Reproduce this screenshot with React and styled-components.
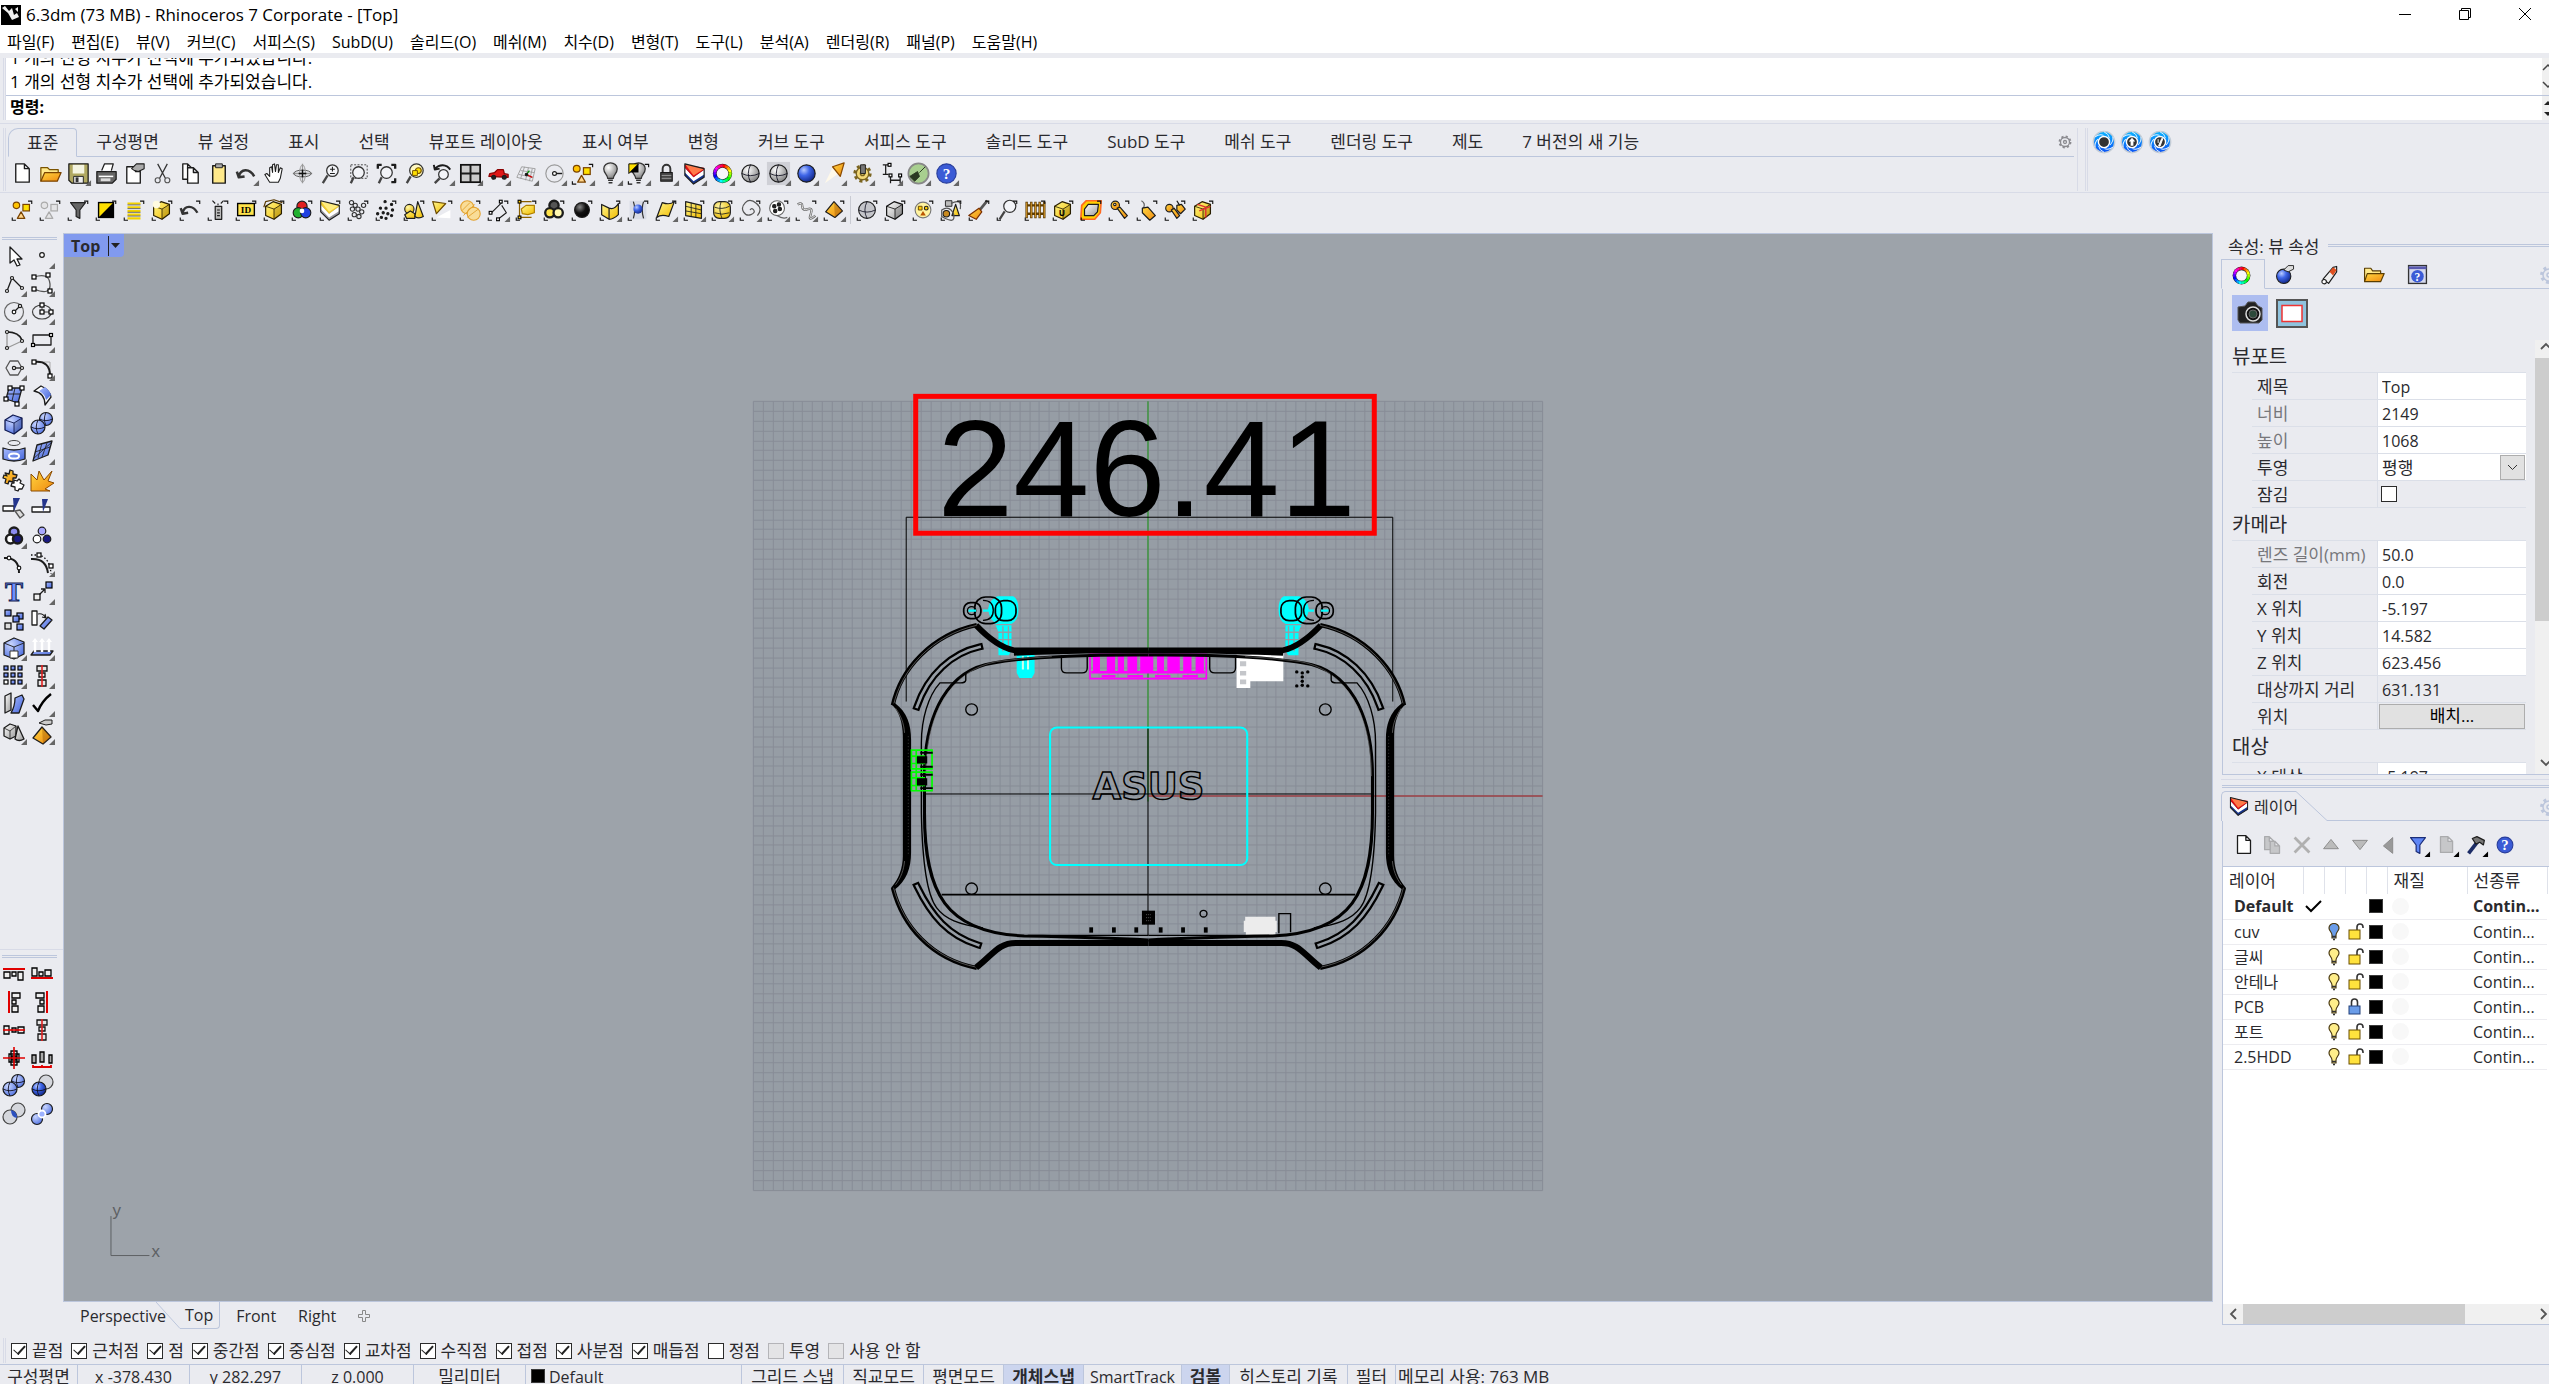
import React from 'react';
import styled, { createGlobalStyle, css } from 'styled-components';

const C = {
  bg: '#eaebf0',
  line: '#bcc6dc',
  soft: '#d8dbe7',
  text: '#2a2a2e',
  view: '#9da3aa',
};

const Global = createGlobalStyle`
  * { box-sizing: border-box; }
  html, body, #root { height: 100%; }
  body {
    margin: 0;
    overflow: hidden;
    background: ${C.bg};
    color: ${C.text};
    font-family: 'Open Sans', 'Noto Sans CJK KR', sans-serif;
    font-size: 16px;
  }
  button, input, select { font: inherit; color: inherit; }
`;

/* ---------- layout ---------- */

const Window = styled.div`
  height: 100vh;
  display: flex;
  flex-direction: column;
  overflow: hidden;
`;
const TitleBar = styled.header`
  display: flex;
  align-items: center;
  gap: 12px;
  height: 28px;
  background: #fff;
  color: #000;
`;
const AppBrand = styled.div`
  flex: 1;
  display: flex;
  align-items: center;
  gap: 5px;
`;
const AppTitle = styled.h1`
  margin: 0;
  font-size: 17px;
  font-weight: 400;
`;
const CaptionButton = styled.button`
  width: 48px;
  height: 28px;
  padding: 0;
  border: 0;
  background: none;
  display: grid;
  place-items: center;
`;
const MenuBar = styled.nav`
  display: flex;
  gap: 17px;
  height: 25px;
  padding: 0 7px;
  background: #fff;
`;
const MenuItem = styled.button`
  padding: 0;
  border: 0;
  background: none;
  color: #000;
  font-size: 16px;
  line-height: 28px;
  white-space: nowrap;
`;
const CommandArea = styled.section`
  margin-top: 5px;
  padding-left: 3px;
  display: flex;
`;
const Grip = styled.div`
  width: 3px;
  margin-right: ${p => p.$gap || 0}px;
  border-left: 1px solid ${C.soft};
  border-right: 1px solid ${C.soft};
`;
const CommandBody = styled.div`
  flex: 1;
  position: relative;
  background: #fff;
  color: #000;
`;
const History = styled.div`
  height: 38px;
  padding: 0 4px 1px;
  border-bottom: 1px solid ${C.line};
  overflow: hidden;
  display: flex;
  flex-direction: column;
  justify-content: flex-end;
  font-size: 17px;
  line-height: 24px;
`;
const HistoryLine = styled.div`
  flex: none;
`;
const Prompt = styled.label`
  display: flex;
  height: 24px;
  padding: 0 4px;
  font-weight: 700;
  line-height: 22px;
`;
const PromptInput = styled.input`
  flex: 1;
  border: 0;
  outline: 0;
  background: none;
`;
const EdgeArrows = styled.div`
  position: absolute;
  right: 0;
  top: 0;
  bottom: 0;
  width: 7px;
  background: #f0f0f0;
`;

const ToolbarArea = styled.section`
  margin-top: 3px;
  border-top: 1px solid ${C.soft};
`;
const DockRow = styled.div`
  display: flex;
  height: 69px;
  padding: 4px 0 1px 3px;
  border-bottom: 1px solid ${C.soft};
`;
const TabbedDock = styled.div`
  width: 2070px;
  border-right: 1px solid ${C.soft};
  padding-right: 3px;
`;
const TabStrip = styled.div`
  display: flex;
  height: 29px;
  align-items: stretch;
`;
const ToolTab = styled.button`
  padding: 0 20px 0 19px;
  border: 0;
  border-bottom: 1px solid ${C.line};
  background: none;
  font-size: 17px;
  line-height: 28px;
  white-space: nowrap;
  ${p => p.$active && css`
    border: 1px solid ${C.line};
    border-bottom-color: transparent;
    border-radius: 10px 4px 0 0;
    padding: 0 18px;
    line-height: 27px;
  `}
`;
const TabRest = styled.div`
  flex: 1;
  display: flex;
  justify-content: flex-end;
  align-items: center;
  border-bottom: 1px solid ${C.line};
`;
const PlainDock = styled.div`
  display: flex;
  padding-left: 7px;
`;
const ToolRow = styled.div`
  display: flex;
  align-items: center;
  height: ${p => p.$h}px;
  padding-left: ${p => p.$left || 0}px;
  padding-bottom: 1px;
`;
const ToolButton = styled.button`
  width: 28px;
  height: ${p => p.$h || 28}px;
  padding: 0;
  border: 0;
  background: none;
  display: grid;
  place-items: center;
`;
const Separator = styled.i`
  width: 1px;
  height: 28px;
  margin: 0 2px;
  background: #c9cbd3;
`;

const Main = styled.main`
  flex: 1;
  min-height: 0;
  display: flex;
`;
const SideBar = styled.aside`
  width: 63px;
  display: flex;
  flex-direction: column;
`;
const SideGroup = styled.div`
  flex: ${p => (p.$rest ? 1 : 'none')};
  min-height: ${p => p.$min || 0}px;
  border-top: 1px solid ${p => (p.$rest ? 'transparent' : C.soft)};
`;
const SideGrip = styled.div`
  height: 3px;
  margin: ${p => p.$top}px 6px 2px 2px;
  border-top: 1px solid ${C.line};
  border-bottom: 1px solid ${C.line};
`;
const SideTools = styled.div`
  display: grid;
  grid-template-columns: 28px 28px;
`;
const Center = styled.section`
  flex: 1;
  min-width: 0;
  display: flex;
  flex-direction: column;
  padding-top: 5px;
`;
const Viewport = styled.div`
  flex: 1;
  min-height: 0;
  position: relative;
  border: 1px solid ${C.line};
  background: ${C.view};
`;
const Scene = styled.svg`
  display: block;
  width: 100%;
  height: 100%;
`;
const ViewLabel = styled.button`
  position: absolute;
  left: 0;
  top: 0;
  display: flex;
  align-items: center;
  gap: 6px;
  width: 60px;
  height: 23px;
  padding: 0 0 0 7px;
  border: 0;
  border-radius: 0 0 4px 0;
  background: #819aee;
  font-size: 16px;
  line-height: 22px;
  font-weight: 700;
`;
const ViewTabs = styled.div`
  display: flex;
  height: 35px;
  padding: 0 0 8px 17px;
`;
const ViewTab = styled.button`
  padding: 0;
  margin-right: 22px;
  border: 0;
  background: none;
  font-size: 16px;
  line-height: 26px;
`;
const ActiveViewTab = styled(ViewTab)`
  margin: 0 16px 0 0;
  padding-right: 6px;
  border-right: 1px solid ${C.line};
  border-bottom: 1px solid ${C.line};
  border-radius: 0 0 4px 0;
`;
const Slant = styled.svg`
  flex: none;
  margin-left: -32px;
  width: 25px;
  height: 27px;
`;
const SlantGap = styled.i`
  width: 4px;
  border-bottom: 1px solid ${C.line};
`;

/* ---------- right side ---------- */

const Panels = styled.aside`
  width: 336px;
  padding-left: 8px;
  display: flex;
  flex-direction: column;
  overflow: hidden;
`;
const PanelTitle = styled.div`
  display: flex;
  align-items: center;
  gap: 8px;
  height: 31px;
  padding: 4px 0 0 7px;
  font-size: 17px;
  white-space: nowrap;
`;
const DoubleRule = styled.i`
  flex: 1;
  height: 3px;
  border-top: 1px solid ${C.line};
  border-bottom: 1px solid ${C.line};
`;
const PanelTabs = styled.div`
  display: flex;
  height: 30px;
`;
const PanelTab = styled.button`
  width: 44px;
  padding: 2px 4px 0 0;
  border: 0;
  border-bottom: 1px solid ${C.line};
  background: none;
  display: grid;
  place-items: center;
  ${p => p.$active && css`
    border: 1px solid ${C.line};
    border-bottom-color: transparent;
  `}
`;
const PropsBody = styled.div`
  height: 486px;
  margin-left: 1px;
  border-left: 1px solid ${C.line};
  border-bottom: 1px solid ${C.line};
  overflow: hidden;
`;
const ModeRow = styled.div`
  display: flex;
  align-items: center;
  gap: 8px;
  height: 51px;
  padding: 6px 0 9px 9px;
`;
const ModeButton = styled.button`
  width: ${p => (p.$on ? 36 : 32)}px;
  height: 36px;
  padding: 0;
  border: 0;
  background: ${p => (p.$on ? '#adbdf0' : 'none')};
  display: grid;
  place-items: center;
`;
const ScrollArea = styled.div`
  display: flex;
  height: 434px;
`;
const PropsList = styled.div`
  flex: 1;
  padding: 0 9px 0 9px;
`;
const SectionTitle = styled.h2`
  height: 33px;
  margin: 0;
  border-bottom: 1px solid #dbdfe8;
  font-size: 20px;
  font-weight: 400;
  line-height: 33px;
`;
const PropRow = styled.label`
  display: flex;
  height: 27px;
  margin-left: 20px;
  font-size: 17px;
  line-height: 28px;
`;
const PropLabel = styled.span`
  width: 126px;
  padding-left: 5px;
  border-right: 1px solid #dbdfe8;
  border-bottom: 1px solid #dbdfe8;
  color: ${p => (p.$dim ? '#77777b' : C.text)};
  white-space: nowrap;
`;
const PropCell = styled.span`
  flex: 1;
  display: flex;
  align-items: center;
  min-width: 0;
  border-bottom: 1px solid #dbdfe8;
  background: ${p => (p.$plain ? 'transparent' : '#fff')};
`;
const PropInput = styled.input`
  width: 100%;
  height: 26px;
  padding: 2px 4px 0;
  border: 0;
  outline: 0;
  background: none;
  font-size: 16px;
`;
const PropSelect = styled.select`
  appearance: none;
  flex: 1;
  height: 26px;
  padding: 0 4px;
  border: 0;
  background: none;
  font-size: 17px;
`;
const Chevron = styled.span`
  width: 25px;
  height: 25px;
  margin-right: 1px;
  border: 1px solid #adadad;
  background: #e1e1e1;
  display: grid;
  place-items: center;
`;
const PlaceButton = styled.button`
  flex: 1;
  height: 25px;
  margin: 0 1px;
  padding: 0;
  border: 1px solid #adadad;
  background: #e1e1e1;
  color: #000;
  font-size: 17px;
  line-height: 22px;
`;
const CheckBox = styled.input`
  appearance: none;
  flex: none;
  width: 16px;
  height: 16px;
  margin: 0 ${p => p.$m || 0}px;
  border: 1px solid #2b2b2b;
  background: #fff;
  display: grid;
  place-items: center;
  &:checked::before {
    content: '';
    width: 10px;
    height: 5px;
    border-left: 1px solid #222;
    border-bottom: 2px solid #222;
    transform: translateY(-2px) rotate(-48deg);
  }
  &:disabled {
    border-color: #b4b4b8;
    background: #e4e4e6;
  }
`;
const VScroll = styled.div`
  width: 14px;
  background: #f0f0f0;
  display: flex;
  flex-direction: column;
  align-items: flex-end;
  justify-content: space-between;
`;
const VThumb = styled.i`
  align-self: stretch;
  height: 263px;
  margin-bottom: auto;
  background: #cdcdcd;
`;
const ArrowSvg = styled.svg`
  flex: none;
  display: block;
`;
const Divider = styled.div`
  height: 5px;
  border-bottom: 1px solid ${C.soft};
`;
const LayerGrip = styled.div`
  display: flex;
  padding: 5px 0 3px 1px;
`;
const LayerTabs = styled.div`
  display: flex;
  height: 30px;
`;
const LayerTab = styled.button`
  display: flex;
  align-items: center;
  gap: 3px;
  padding: 0 0 1px 5px;
  border: 1px solid ${C.line};
  border-width: 1px 0 0 1px;
  border-radius: 5px 0 0 0;
  background: none;
  font-size: 16px;
`;
const LayerTabText = styled.span`
  width: 42px;
  white-space: nowrap;
`;
const LayerSlant = styled.svg`
  width: 31px;
  height: 30px;
`;
const LayerTools = styled.div`
  display: flex;
  align-items: center;
  gap: 1px;
  height: 46px;
  margin-left: 1px;
  padding: 3px 0 0 7px;
  border-left: 1px solid ${C.line};
  border-bottom: 1px solid ${C.line};
`;
const LayerBody = styled.div`
  flex: 1;
  display: flex;
  flex-direction: column;
  justify-content: space-between;
  margin: 0 0 12px 1px;
  border-left: 1px solid ${C.line};
  border-bottom: 1px solid ${C.line};
  background: #fff;
`;
const LayerTable = styled.table`
  width: 324px;
  table-layout: fixed;
  border-collapse: collapse;
  font-size: 16px;
`;
const Th = styled.th`
  width: ${p => p.$w}px;
  height: 27px;
  padding: 0 6px;
  border-right: 1px solid #dfe2ea;
  font-weight: 400;
  font-size: 17px;
  line-height: 24px;
  text-align: left;
  white-space: nowrap;
`;
const Tr = styled.tr`
  height: 25px;
  border-bottom: 1px solid #ececf0;
  font-weight: ${p => (p.$bold ? 700 : 400)};
`;
const Td = styled.td`
  height: 25px;
  padding: 0 ${p => p.$p ?? 0}px;
  line-height: 22px;
  white-space: nowrap;
  svg { display: block; }
`;
const Swatch = styled.i`
  display: block;
  width: 14px;
  height: 14px;
  background: #000;
  border: 1px solid #3a3a3a;
`;
const Material = styled.i`
  display: block;
  width: 17px;
  height: 17px;
  border-radius: 50%;
  background: #f8f8f8;
`;
const HScroll = styled.div`
  display: flex;
  align-items: center;
  justify-content: space-between;
  height: 20px;
  padding-left: 5px;
  background: #f0f0f0;
`;
const HThumb = styled.i`
  width: 222px;
  height: 20px;
  margin: 0 auto 0 4px;
  background: #cdcdcd;
`;

/* ---------- bottom ---------- */

const SnapBar = styled.div`
  display: flex;
  height: 27px;
  padding: 1px 0 1px 3px;
`;
const SnapItem = styled.label`
  display: flex;
  align-items: center;
  gap: 5px;
  margin-right: 8px;
  font-size: 17px;
  line-height: 24px;
  white-space: nowrap;
`;
const StatusBar = styled.footer`
  display: flex;
  height: 20px;
  border-top: 1px solid ${C.line};
  overflow: hidden;
  font-size: 17px;
  line-height: 24px;
`;
const StatusCell = styled.div`
  width: ${p => p.$w}px;
  padding-left: ${p => (p.$left ? 5 : 0)}px;
  display: flex;
  justify-content: ${p => (p.$left ? 'flex-start' : 'center')};
  gap: 4px;
  border-right: 1px solid ${C.line};
  font-size: ${p => (p.$value ? 16 : 17)}px;
  white-space: nowrap;
`;
const StatusSwatch = styled(Swatch)`
  margin-top: 4px;
`;
const StatusToggle = styled.button`
  width: ${p => p.$w}px;
  height: 24px;
  padding: 0;
  border: 0;
  border-right: 1px solid ${C.line};
  background: ${p => (p.$on ? '#ccd5ee' : 'none')};
  font-size: ${p => (p.$value ? 16 : 17)}px;
  font-weight: ${p => (p.$on ? 700 : 400)};
  line-height: 24px;
  white-space: nowrap;
`;
const Memory = styled.div`
  padding-left: 2px;
`;

/* ---------- icon drawing parts ---------- */

const K = '#1c1c1c';

const Defs = () => (
  <svg width="0" height="0" style={{ position: 'absolute' }} aria-hidden="true">
    <defs>
      <radialGradient id="blue" cx=".35" cy=".3" r=".8"><stop offset="0" stopColor="#b9cbff" /><stop offset=".4" stopColor="#3f66e8" /><stop offset="1" stopColor="#0a1d78" /></radialGradient>
      <radialGradient id="lite" cx=".35" cy=".3" r=".8"><stop offset="0" stopColor="#c9d6ff" /><stop offset="1" stopColor="#4a6ce0" /></radialGradient>
      <radialGradient id="gray" cx=".35" cy=".3" r=".8"><stop offset="0" stopColor="#fff" /><stop offset="1" stopColor="#777" /></radialGradient>
      <radialGradient id="dark" cx=".35" cy=".3" r=".8"><stop offset="0" stopColor="#888" /><stop offset=".5" stopColor="#111" /><stop offset="1" stopColor="#000" /></radialGradient>
      <radialGradient id="gold" cx=".35" cy=".3" r=".8"><stop offset="0" stopColor="#fff7a8" /><stop offset="1" stopColor="#e8b800" /></radialGradient>
      <linearGradient id="yel" x1="0" y1="0" x2="1" y2="1"><stop offset="0" stopColor="#fff58a" /><stop offset="1" stopColor="#f2bc00" /></linearGradient>
      <linearGradient id="ora" x1="0" y1="0" x2="1" y2="1"><stop offset="0" stopColor="#ffd640" /><stop offset="1" stopColor="#f08a10" /></linearGradient>
      <linearGradient id="blin" x1="0" y1="0" x2="1" y2="1"><stop offset="0" stopColor="#a9bcff" /><stop offset="1" stopColor="#4364d8" /></linearGradient>
      <linearGradient id="glin" x1="0" y1="0" x2="1" y2="1"><stop offset="0" stopColor="#fff" /><stop offset="1" stopColor="#9a9a9a" /></linearGradient>
      <linearGradient id="swirl" x1="0" y1="0" x2="0" y2="1"><stop offset="0" stopColor="#0ab4ff" /><stop offset="1" stopColor="#0a50f5" /></linearGradient>
    </defs>
  </svg>
);

const Sq = ({ x, y, s = 4, f = '#fff' }) => <rect x={x - s / 2} y={y - s / 2} width={s} height={s} fill={f} stroke="#000" strokeWidth="1.2" />;
const L = ({ d, c = K, w = 1.3, f = 'none', ...r }) => <path d={d} stroke={c} strokeWidth={w} fill={f} strokeLinejoin="round" {...r} />;
const O = ({ x = 14, y = 14, r = 8, f = 'none', c = K, w = 1.2 }) => <circle cx={x} cy={y} r={r} fill={f} stroke={c} strokeWidth={w} />;

const Wheel = ({ x = 14, y = 14, r = 8, w = 4 }) => (
  <>
    <O x={x} y={y} r={r + w / 2} f="#222" w={0} />
    {Array.from({ length: 18 }, (_, i) => {
      const a = (i * Math.PI) / 9;
      const b = a + 0.38;
      return <path key={i} fill="none" strokeWidth={w - 1} stroke={`hsl(${i * 20} 100% 50%)`}
        d={`M${x + r * Math.sin(a)} ${y - r * Math.cos(a)}A${r} ${r} 0 0 1 ${x + r * Math.sin(b)} ${y - r * Math.cos(b)}`} />;
    })}
    <O x={x} y={y} r={r - w / 2} f="#f6f6f8" w={0} />
  </>
);
const Doc = ({ x = 7, y = 4, w = 14, h = 19, f = '#fff', c = K }) => (
  <L d={`M${x} ${y}h${w - 5}l5 5v${h - 5}h-${w}zM${x + w - 5} ${y}v5h5`} f={f} c={c} w={1.4} />
);
const Lens = ({ x = 16, y = 11, r = 6, f = '#f3f4f8' }) => (
  <><L d={`M${x - r + 1} ${y + r - 1}L6 24`} w={2.4} c="#444" /><O x={x} y={y} r={r} f={f} c="#333" w={1.3} /></>
);
const Cube = ({ f = 'url(#yel)', c = '#2b2000' }) => (
  <><L d="M5 10l8-5 9 3v10l-8 6-9-4z" f={f} c={c} /><path d="M14 13l8-5v10l-8 6z" fill="#000" opacity=".16" /><L d="M5 10l9 3 8-5M14 13v11" c={c} w={0.9} /></>
);
const Ball = ({ x = 14, y = 14, r = 8, f = 'url(#blue)', wire }) => (
  <><O x={x} y={y} r={r} f={f} />{wire && <L d={`M${x - r} ${y}q${r} ${r / 2} ${r * 2} 0M${x} ${y - r}q-${r / 2} ${r} 0 ${r * 2}`} w={0.9} c="#112" />}</>
);
const Bulb = ({ f = 'url(#gray)', c = '#333' }) => (
  <><L d="M11 19c0-4-4-5-4-10a7 6 0 0 1 14 0c0 5-4 6-4 10z" f={f} c={c} /><L d="M11.500 21h5M12 23.500h4" c={c} w={1.6} /></>
);
const Shapes = ({ f = '#ffc400', g = '#ffe000', h = '#ffd58a', c = '#7a4300' }) => (
  <><O x={8} y={9} r={3.500} f={f} c={c} /><rect x="15" y="8" width="7" height="7" fill={g} stroke={c} strokeWidth="1.3" /><L d="M13 16l4 7H9z" f={h} c={c} /></>
);
const Help = ({ r = 9 }) => (
  <><O r={r} f="#3b5bd6" c="#2a3f9c" /><text x="14" y="19.500" textAnchor="middle" fontSize="16" fontWeight="700" fill="#fff" fontFamily="Liberation Serif, serif">?</text></>
);
const Wedge = ({ a = '#ff7a4a', r = '#e01010', b = '#fff', d = '#16348a' }) => (
  <>
    <path d="M4 5v11l9 9 11-7V9z" fill={d} />
    <path d="M4 8v5l9 9 11-7v-5l-11 8z" fill={b} />
    <path d="M4 5v3l9 10 11-8V8z" fill={r} />
    <path d="M4 4l20 5-11 7z" fill={a} />
    <L d="M4 4l20 5v9l-11 7-9-9z" w={1.200} />
  </>
);
const Undo = () => <L d="M6 17c2-8 11-9 16 0M4 12l2 6 6-1" w={2.6} c="#333" />;
const Funnel = ({ f = '#666', c = '#222' }) => <L d="M6 6h16l-6 8v9l-4-2v-7z" f={f} c={c} />;
const Pyramid = ({ y = 0 }) => <><L d={`M14 ${5 + y}l9 10-8 7-10-6z`} f="url(#ora)" /><path d={`M14 ${5 + y}l9 10-8 7z`} fill="#8a4a00" opacity=".35" /></>;
const Hand = () => <L d="M9 23l-5-8 2-1 3 3V8l2-1 1 6V5l2-1 1 8 1-7 2 0 0 8 2-5 2 1-2 10-2 4z" f="#fff" w={1.1} />;
const Swirl = ({ kind }) => (
  <>
    <O r={11.500} f="url(#swirl)" c="#c3ccd6" w={1.5} />
    {[0, 60, 120, 180, 240, 300].map(a => <path key={a} transform={`rotate(${a} 14 14)`} d="M14 3q5 2 6 7" stroke="#e4f4ff" strokeWidth="1" fill="none" />)}
    <O r={6} f="#333" c="#fff" w={1.5} />
    {kind === 1 && <path d="M14 9.500l3.500 4h-2V18h-3v-4.500h-2z" fill="#fff" />}
    {kind === 2 && <path d="M16 10l-3.500 8 1.500.5 3-8zM12 11v4" fill="#fff" stroke="#fff" />}
  </>
);
const GearShape = ({ x = 14, y = 14, r = 5, c = '#777', w = 1.5, f = 'none', n = 8 }) => (
  <>
    <circle cx={x} cy={y} r={r + 1.500} fill="none" stroke={c} strokeWidth="3" strokeDasharray={`${((r + 1.500) * Math.PI) / n}`} />
    <O x={x} y={y} r={r} f={f === 'none' ? C.bg : f} c={c} w={w} />
    <O x={x} y={y} r={r / 3} c={c} w={w} />
  </>
);

const icons = {
  new: <Doc />,
  open: <><L d="M4 22V8h7l2 2h9v3" f="#ffe98a" c="#7a5300" /><L d="M4 22l4-9h17l-4 9z" f="url(#ora)" c="#7a4300" /></>,
  save: <><L d="M4 4h20v20H7l-3-3z" f="#b0a860" /><path d="M8 5h12v9H8z" fill="#f4f4e0" /><path d="M9 17h10v7H9z" fill="#eee" stroke="#222" /><path d="M11 18h3v5h-3z" fill="#333" /></>,
  print: <><L d="M9 11l3-7h9l-2 7" f="#fff" /><L d="M4 12h20v8l-4 4H4z" f="#666" /><L d="M6 17h15" c="#fff" w={1.6} /><path d="M8 19h10v3H8z" fill="#ddd" /></>,
  props: <><Doc x={6} y={7} h={17} /><L d="M11 9l5-5h8v5l-6 3-4-1z" f="#aaa" w={1.1} /></>,
  cut: <><L d="M9 4l8 15M19 4l-8 15" w={1.3} c="#333" /><O x={9} y={21} r={2.6} c="#555" /><O x={19} y={21} r={2.6} c="#555" /></>,
  copy: <><Doc x={6} y={4} w={10} h={16} /><Doc x={11} y={8} w={11} h={16} /></>,
  paste: <><L d="M8 6h13v18H8z" f="#ffe98a" w={1.5} /><path d="M11 4h7v4h-7z" fill="#aaa" stroke="#222" /></>,
  undo: <Undo />,
  pan: <Hand />,
  rotate: <><L d="M14 4v20M4 14h20" c="#999" /><ellipse cx="14" cy="14" rx="9" ry="3.500" fill="none" stroke="#555" /><ellipse cx="14" cy="14" rx="3" ry="9" fill="none" stroke="#999" /><path d="M14 10v8M10 14h8" stroke="#111" strokeWidth="1.500" /></>,
  zoomdyn: <><Lens /><L d="M16 7v5M13.500 9.500h5M13.500 14h5" w={1.1} /></>,
  zoomwin: <><Lens x={14} y={13} /><rect x="6" y="5" width="17" height="14" fill="none" stroke="#444" strokeDasharray="2 1.500" /></>,
  zoomext: <><Lens x={14} y={13} /><L d="M5 9V5h4M19 5h4v4M23 19v4h-4" w={2.4} /></>,
  zoomsel: <><Lens f="#fff8c0" r={7} /><O x={18} y={11} r={3} f="#ffe000" c="#775500" /><path d="M12 11h5v5h-5z" fill="#ffe000" stroke="#775500" /></>,
  zoomundo: <><Lens x={15} y={15} r={5} /><L d="M6 9c5-5 12-5 16 1M5 5l1 5 5-1" w={2} /></>,
  four: <><rect x="4" y="5" width="20" height="18" fill="#ccc" stroke="#111" strokeWidth="1.800" /><L d="M14 5v18M4 14h20" w={2} /></>,
  car: <><L d="M4 17l1-3 5-1 3-3h6l1 4 4 1v3z" f="#e01818" c="#8a0000" /><O x={9} y={18} r={2} f="#222" /><O x={20} y={18} r={2} f="#222" /></>,
  cplane: <><L d="M9 7l14 2-3 13-16-4zM12 7l-4 12M16 8l-3 13M20 9l-3 13M8 11l14 2M6 15l15 3" c="#999" w={0.9} /><L d="M14 15l6 3" c="#c00" w={1.3} /><L d="M14 15l3-4" c="#090" w={1.3} /><O x={14} y={15} r={1.300} f="#111" /></>,
  circ: <><O r={9} c="#999" /><L d="M14 14h8" w={1.5} /><O r={2} f="#fff" /></>,
  shapes: <Shapes />,
  shapesGray: <Shapes f="#e4e4e6" g="#e4e4e6" h="#e4e4e6" c="#aaa" />,
  bulb: <Bulb />,
  bulbHalf: <><Bulb /><path d="M4 4h10L4 14z" fill="#ffe000" stroke="#000" /><path d="M14 4v9H5z" fill="#000" /></>,
  lock: <><L d="M10 13V9a4 4 0 0 1 8 0v4" w={2} c="#333" /><rect x="8" y="13" width="12" height="9" fill="#444" stroke="#111" /><path d="M9 16h10M9 19h10" stroke="#999" /></>,
  layer: <Wedge />,
  wheel: <Wheel />,
  gball: <Ball r={9} f="url(#gray)" wire />,
  gballSel: <><path d="M2 2h24v24H2z" fill="#cfd0d6" /><Ball r={9} f="url(#gray)" wire /></>,
  bball: <Ball r={9} />,
  spot: <><path d="M4 24l8-16 6 6z" fill="#fff9ea" /><L d="M12 7l12-4-4 14z" f="url(#ora)" c="#8a4a00" /></>,
  gears: <><GearShape r={6.500} c="#7a6420" f="#f2d878" /><path d="M12 5h5v9h-5z" fill="#777" stroke="#222" /></>,
  dims: <><L d="M6 5h6M6 15h6M9 5v10M14 15v9M24 15v9M14 21h10" w={1.3} /><Sq x={13} y={5} s={3} /><Sq x={14} y={16} s={3} /><Sq x={24} y={16} s={3} /></>,
  green: <><O r={10.500} f="#a8cf8f" c="#888" w={1.8} /><path d="M5 17l8-5 2 5-5 5zM15 13l6-6" fill="#2b3a22" stroke="#2b3a22" /></>,
  help: <Help r={10} />,

  funnel: <Funnel />,
  diag: <><rect x="6" y="6" width="16" height="16" fill="#ffe000" stroke="#000" strokeWidth="1.500" /><path d="M22 6v16H6z" fill="#000" /></>,
  rows: <><L d="M7 7h14M7 11h14M7 15h14M7 19h14M7 23h14" c="#f2d200" w={2.2} /><L d="M7 8.500h14M7 12.500h14M7 16.500h14M7 20.500h14" c="#444" w={0.8} /></>,
  boxSpark: <><Cube /><O x={8} y={8} r={4} f="#fffbe0" w={0} /></>,
  remote: <><L d="M11 10h7v14h-7z" f="#bbb" /><L d="M14 9V7M8 4l3 3M20 4l-3 3" w={1.2} /><L d="M13 14h3M13 17h3M13 20h3" w={1.3} /></>,
  id: <><rect x="5" y="7" width="18" height="13" fill="#ffe34a" stroke="#000" strokeWidth="1.500" /><text x="14" y="17.500" fontSize="10" fontWeight="700" textAnchor="middle" fontFamily="Liberation Serif, serif">ID</text></>,
  box: <><Cube /><L d="M3 11l2-6 9-2 9 3" c="#5b3a00" /></>,
  rgb: <><O x={14} y={10} r={5.500} f="#e02020" /><O x={10} y={17} r={5.500} f="#20b030" /><O x={18} y={17} r={5.500} f="#2040e0" /><O x={14} y={15} r={2.500} f="#fff" w={0} /></>,
  ywedge: <Wedge a="#ffec80" r="#f0cc30" b="#fff" d="#9a9aa0" />,
  rings: <>{[[7, 6], [11, 9], [20, 9], [8, 13], [14, 13], [18, 16], [10, 19], [15, 21]].map(([x, y], i) => <O key={i} x={x} y={y} r={2.300} c="#333" />)}</>,
  dots: <>{[[13, 5], [20, 8], [8, 12], [14, 12], [21, 14], [5, 18], [11, 17], [16, 18], [9, 22], [14, 23], [20, 20]].map(([x, y], i) => <O key={i} x={x} y={y} r={1.200} f="#111" />)}</>,
  prims: <><O x={9} y={13} r={5} f="url(#gold)" /><L d="M4 19l6-4 5 3v5H6z" f="url(#yel)" /><L d="M18 5l6 16q-5 3-9 0z" f="url(#yel)" /></>,
  ycone: <><path d="M8 22l15-8v9z" fill="#fff" /><L d="M4 5l14 2-10 11z" f="url(#yel)" c="#6b4a00" /></>,
  hatch: <><O x={11} y={11} r={7} f="#f9dd97" c="#e3a332" /><O x={18} y={18} r={7} f="#f9dd97" c="#e3a332" /><L d="M5 15l9-9M7 20L19 8M11 22l12-9" c="#e3a332" w={1} /></>,
  dimang: <><L d="M6 18L18 6M18 9l5 8-9 7" w={1.2} /><Sq x={6} y={17} s={3} /><Sq x={17} y={5} s={3} /><Sq x={14} y={24} s={3} /></>,
  handy: <><L d="M7 5h13M7 22h13M7 5v17" c="#8a6000" /><L d="M9 13l5-4h9v8l-7 2-6-1z" f="url(#yel)" c="#b08000" /><Sq x={7} y={5} s={3} f="#fc0" /><Sq x={7} y={22} s={3} f="#fc0" /></>,
  threeY: <><O x={14} y={9} r={5} f="#555" w={2.500} /><O x={9.500} y={17} r={5} f="#ffe34a" w={2.500} /><O x={18.500} y={17} r={5} f="#fff7b0" w={2.500} /></>,
  black: <Ball f="url(#dark)" />,
  ysurf: <><L d="M5 8l8 4v12l-8-5zM13 12q6 2 10-5v12q-5 5-10 5z" f="url(#yel)" /></>,
  bwhite: <><rect x="5" y="4" width="18" height="20" fill="#d8dbe6" /><L d="M9 5q3 8 0 18M20 5q-3 8 0 18" c="#333" /><O x={14} y={13} r={5} f="url(#blue)" w={0} /></>,
  yplane: <L d="M10 6q8 3 13-1l-6 16q-8-3-13 1z" f="url(#yel)" />,
  ygrid: <><L d="M5 5l17 4v14L5 20z" f="url(#yel)" /><L d="M11 6v15M16 8v14M5 10l17 4M5 15l17 3" w={0.9} /></>,
  ycube: <><rect x="5" y="5" width="18" height="18" rx="6" fill="url(#gold)" stroke="#222" strokeWidth="1.300" /><L d="M6 11q8 3 16-1M6 17q8 3 16 0M13 5q-3 9 1 18" w={0.9} /></>,
  spiral: <L d="M14 14q2-3 4 0t-3 5-8-3 2-10 12 1 1 13" c="#555" />,
  spool: <><O x={13} y={12} r={8} f="#fff" c="#666" /><O x={10} y={10} r={1.800} f="#222" /><O x={15} y={8} r={1.800} f="#222" /><O x={16} y={13} r={1.800} f="#222" /><O x={11} y={15} r={1.800} f="#222" /><L d="M13 20q6 4 11 2" c="#666" /></>,
  chain: <><L d="M5 8q5-3 5 2t6 3 3 6 5 1" c="#666" w={2.600} /><L d="M5 8q5-3 5 2t6 3 3 6 5 1" c="#eee" w={1} /></>,
  pyramid: <Pyramid />,

  gball2: <Ball r={9} f="#c4c5ca" wire />,
  gcube: <Cube f="url(#glin)" c="#111" />,
  cookie: <><O r={8.500} f="#fff3a0" c="#777" /><path d="M9 10h4v4H9z" fill="#fc0" stroke="#640" /><O x={17.500} y={12} r={2} f="#fc0" /><path d="M14 15l3 5h-6z" fill="#b50" /></>,
  prims2: <><path d="M8 4h7v6H8z" fill="#bbb" stroke="#222" /><O x={9} y={18} r={3.500} f="#c98a20" /><L d="M19 8l4 12h-8z" f="url(#yel)" /><L d="M4 14q6-4 10 0t3 9-13-2zM14 7q12-6 10 6" c="#555" /></>,
  brush: <><L d="M23 4l-9 11" w={3} c="#555" /><L d="M14 12l3 4-6 8-8-4z" f="url(#ora)" c="#7a2f00" /></>,
  lens: <Lens r={6.500} x={17} y={10} />,
  fence: <><L d="M5 5v18M10 5v18M14.500 5v18M19 5v18M24 5v18M4 9h21M4 18h21" c="#5e3c00" w={2.600} /><L d="M5 6v16M10 6v16M14.500 6v16M19 6v16M24 6v16" c="#e0a030" w={1} /></>,
  ubox: <><Cube /><text x="9.500" y="20" fontSize="9" fontWeight="700">U</text></>,
  hbox: <><L d="M4 9l5-5h16l-1 13-6 7H3z" f="#ffd000" c="#ff6a20" w={1.800} /><L d="M7 13l4-5h11l-1 8-4 4H7z" f="url(#glin)" /></>,
  key: <><O x={10} y={9} r={4.500} f="url(#ora)" /><L d="M12 12l8 11 3-3-8-9z" f="url(#ora)" /><O x={9.500} y={8} r={1.300} f="#fff" /></>,
  tag: <><L d="M8 4q5 3 2 8" c="#666" /><L d="M9 12l6-1 8 9-6 5-8-8z" f="url(#ora)" /></>,
  keys: <><O x={8} y={12} r={4} f="url(#ora)" /><L d="M10 14l6 9 3-3-6-8z" f="url(#ora)" /><L d="M16 9l5-1 4 5-5 5-4-4z" f="url(#ora)" /><L d="M16 4l3 5" /></>,
  rbox: <><Cube /><L d="M8 8l9 3v11M10 15l12-5" c="#e03030" w={1.500} /></>,

  select: <L d="M10 5v16l4-3 3 6 3-1-3-6h5z" f="#fff" />,
  point: <O x={14} y={13} r={2.300} f="#fff" />,
  poly: <><L d="M7 21l5-13 10 10" /><O x={7} y={21} r={1.500} f="#fff" /><O x={12} y={8} r={1.500} f="#fff" /><O x={22} y={18} r={1.500} f="#fff" /></>,
  curve: <><L d="M6 7q15-5 16 7t-16 5" c="#555" /><Sq x={6} y={7} /><Sq x={20} y={5} /><Sq x={6} y={19} /><Sq x={22} y={21} /></>,
  circle: <><O r={9.500} c="#666" /><L d="M14 14l6-6" /><O r={1.800} f="#fff" /><O x={20} y={8} r={1.600} f="#fff" /></>,
  ellipse: <><ellipse cx="14" cy="14" rx="9.500" ry="7" fill="none" stroke="#444" strokeWidth="1.200" /><L d="M14 7v7h9" c="#777" /><Sq x={14} y={7} /><Sq x={14} y={14} /><Sq x={23} y={14} /></>,
  arc: <><L d="M7 22V6q12 0 15 9z" c="#999" /><L d="M7 6q12 0 15 8" w={1.600} /><O x={7} y={6} r={1.500} f="#fff" /><O x={22} y={15} r={1.500} f="#fff" /><O x={7} y={22} r={1.500} f="#fff" /></>,
  rect: <><L d="M5 9h18v10H5z" /><Sq x={5} y={19} s={3} /><Sq x={23} y={9} s={3} /></>,
  hex: <><L d="M6 14l4-7h8l4 7-4 7h-8z" c="#555" /><L d="M14 14h8" /><O r={1.600} f="#fff" /><O x={22} r={1.500} f="#fff" /></>,
  fillet: <><L d="M6 8h16v14" c="#aaa" w={1} /><L d="M6 8q16-2 16 14" w={2} /><Sq x={6} y={8} /><Sq x={22} y={22} /></>,
  srfpts: <><L d="M9 6h13l-4 15-12-4z" f="url(#blin)" /><L d="M8 12h12M15 6l-3 13" w={0.900} /><Sq x={10} y={6} /><Sq x={22} y={6} /><Sq x={6} y={17} /><Sq x={17} y={22} /></>,
  sweep: <><L d="M6 9l7-5q9 4 10 11l-6 8q0-12-11-14z" f="#fff" /><path d="M11 9l6-4q5 4 6 8l-5 5q-1-6-7-9z" fill="url(#blin)" /></>,
  bcube: <Cube f="url(#lite)" c="#101a50" />,
  bspheres: <><Ball x={18} y={9} r={6.500} f="url(#lite)" wire /><Ball x={10} y={17} r={7} f="url(#lite)" wire /></>,
  extrude: <><ellipse cx="14" cy="5" rx="6" ry="2.500" fill="none" stroke="#444" /><L d="M3 10q11 4 22 0v11q-11 4-22 0z" f="url(#blin)" /><ellipse cx="14" cy="18" rx="5" ry="2.500" fill="none" stroke="#fff" strokeWidth="2" /></>,
  mesh: <><L d="M9 7l15-4-4 14-15 6z" f="url(#blin)" /><L d="M7 14l15-5M14 5l-4 15M19 5l-5 14M5 21L24 4" w={0.800} /></>,
  puzzle: <><L d="M5 7l4 1 1-4 3 1 0 3 4 1-1 3-3 0 0 4-4-1-1 3-3-1 1-4-3-1 1-3 3 1z" f="url(#ora)" /><L d="M14 14l3 1 2-2 2 2-1 2 4 2-2 4-3 0-1 2-3-1 0-3-4-1 1-3 2 0z" f="#fff" /></>,
  explode: <L d="M3 25V8l6 6 2-9 5 9 8-9-4 10 6 2-9 6 5 2z" f="url(#ora)" c="#8a4a00" w={1} />,
  trim: <><L d="M3 12h11v5H3z" f="#fff" /><L d="M15 17l5-1 4 5-4 3z" f="#ddd" c="#555" /><path d="M13 4h7l-6 13z" fill="#24358c" /></>,
  split: <><L d="M4 13h18v5H4z" f="#fff" /><path d="M14 5h6l-5 13z" fill="#24358c" /></>,
  group: <><O x={14} y={10} r={4.500} f="#8c8cf0" w={2.500} /><O x={10.500} y={17} r={4.500} f="#fff" w={2.500} /><O x={17.500} y={17} r={4.500} f="#1a1a80" w={2.500} /></>,
  ungroup: <><O x={14} y={9} r={3.800} f="#a8a8ff" /><O x={9} y={17} r={3.800} f="#fff" /><O x={19} y={17} r={3.800} f="#1a1a80" /></>,
  blend: <><L d="M4 8q15-1 15 15" w={2} /><O x={9} y={8} r={1.800} f="#fff" /><O x={19} y={18} r={1.800} f="#fff" /></>,
  offset: <><L d="M3 9q15-1 17 14" w={2} /><path d="M3 5h8q11 3 12 19" fill="none" stroke="#111" strokeDasharray="1.500 2" strokeWidth="1.300" /><Sq x={11} y={5} /><Sq x={23} y={16} /></>,
  text: <text x="14" y="23" textAnchor="middle" fontSize="27" fontWeight="700" fill="#6f8ffb" stroke="#101a50" strokeWidth="1" fontFamily="Liberation Serif, serif">T</text>,
  scale: <><L d="M11 17l6-6M13 11h4v4" /><Sq x={9} y={19} s={6} f="#eee" /><Sq x={21} y={7} s={6} f="url(#blin)" /></>,
  arrayc: <><Sq x={8} y={7} s={6} f="url(#blin)" /><Sq x={20} y={10} s={6} f="url(#blin)" /><Sq x={16} y={13} s={6} f="url(#blin)" /><Sq x={8} y={20} s={6} f="#ddd" /><Sq x={20} y={21} s={6} f="url(#blin)" /></>,
  orient: <><L d="M4 5h5v14H4z" f="#fff" /><L d="M10 8q5-1 7 3M14 11l4 1-1-4" w={1.100} /><L d="M12 20l8-9 4 3-8 9z" f="url(#blin)" /></>,
  shell: <><L d="M4 9l10-5 10 4v12l-10 5-10-4z" f="url(#lite)" /><L d="M4 9l10 4 10-4M14 13v4" w={0.900} /><path d="M10 17h8v7h-8z" fill="#fff" stroke="#333" /></>,
  project: <><path d="M4 8l3-4 3 4zM11 8l3-4 3 4zM18 8l3-4 3 4z" fill="#fff" /><L d="M6 17h19l-3 4H3z" f="url(#blin)" /><path d="M7 18V7M14 18V7M21 18V7" stroke="#fff" strokeWidth="2.400" /></>,
  array: <>{[6, 13, 20].map(x => [6, 13, 20].map(y => <Sq key={`${x}-${y}`} x={x} y={y} s={4} f={x === 6 && y === 20 ? '#fff' : 'url(#blin)'} />))}</>,
  alignc: <><path d="M9 4h10v5H9zM11 11h6v4h-6zM10 18h8v6h-8z" fill="#e4e4e4" stroke="#111" strokeWidth="1.300" /><path d="M14 3v22" stroke="#e02020" strokeWidth="1.600" /></>,
  bend: <><L d="M5 6l6-3v17l-6 3z" f="url(#glin)" /><L d="M15 8l7-3 2 4-5 14-8 0q4-7 4-15z" f="url(#blin)" /></>,
  check: <L d="M5 15l5 6q4-10 13-17" w={2.400} c="#000" />,
  solids: <><L d="M4 10l6-4 6 2v10l-6 3-6-3z" f="url(#glin)" /><L d="M4 10l6 3 6-5M10 13v8" w={0.8} /><L d="M18 8l6 13q-5 3-9 0z" f="url(#glin)" /></>,
  pyramidHand: <><Pyramid y={4} /><L d="M11 5l6-3h7v4l-6 1z" f="#ccc" w={1} /></>,

  alTop: <><path d="M3 9h22" stroke="#e00000" strokeWidth="2" /><path d="M4 12h6v6H4zM12 12h4v4h-4zM18 12h5v8h-5z" fill="#eee" stroke="#000" strokeWidth="1.300" /></>,
  alBot: <><path d="M3 18h22" stroke="#e00000" strokeWidth="2" /><path d="M4 8h5v8H4zM11 12h4v4h-4zM17 10h6v6h-6z" fill="#eee" stroke="#000" strokeWidth="1.300" /></>,
  alLeft: <><path d="M9 3v22" stroke="#e00000" strokeWidth="2" /><path d="M12 5h8v5h-8zM12 12h4v4h-4zM12 18h6v6h-6z" fill="#eee" stroke="#000" strokeWidth="1.300" /></>,
  alRight: <><path d="M19 3v22" stroke="#e00000" strokeWidth="2" /><path d="M8 5h8v5H8zM12 12h4v4h-4zM10 18h6v6h-6z" fill="#eee" stroke="#000" strokeWidth="1.300" /></>,
  alMid: <><path d="M4 10h5v8H4zM12 12h4v4h-4zM18 11h6v6h-6z" fill="#eee" stroke="#000" strokeWidth="1.300" /><path d="M3 14h22" stroke="#e00000" strokeWidth="1.600" /></>,
  alBoth: <><path d="M11 7h6v14h-6zM9 10h10v8H9zM12 12h4v4h-4z" fill="#ddd" stroke="#000" strokeWidth="1.300" /><path d="M3 14h22M14 3v22" stroke="#e00000" strokeWidth="1.600" /></>,
  dist: <><path d="M4 11h4v8H4zM12 8h4v10h-4zM21 11h3v8h-3z" fill="#aaa" stroke="#000" strokeWidth="1.300" /><path d="M5 21v2h18v-2M14 21v2" fill="none" stroke="#e00000" strokeWidth="1.800" /></>,
  bdiff: <><O x={18} y={10} r={7} f="#d5d7dd" c="#444" /><Ball x={11} y={17} r={7} wire /></>,
  binter: <><O x={18} y={10} r={7} f="#d5d7dd" c="#444" /><O x={10} y={17} r={7} f="#d5d7dd" c="#444" /><path d="M11 10q6 1 6 8-6-1-6-8z" fill="#2b50c0" /></>,
  bsplit: <><Ball x={19} y={9} r={5.500} f="url(#lite)" /><Ball x={9} y={19} r={5.500} f="url(#lite)" /><O x={14} y={14} r={3.500} f="#9db2ff" c="#fff" w={1.800} /></>,

  matball: <><Ball x={12} y={16} r={8} /><L d="M12 9l5-5h6v4l-6 3z" f="#ddd" w={1} /></>,
  tube: <><L d="M7 19L18 6l4-1 0 6-9 13z" f="#eee" /><path d="M14 11l4-5 4 3-4 6z" fill="#e05020" /><O x={8} y={22} r={2.500} f="#fff" /></>,
  folder: <><L d="M4 22V7h7l2 3h9v3" f="#ffe98a" c="#5a3d00" /><L d="M4 22l3-9h19l-4 9z" f="url(#ora)" c="#5a3d00" /></>,
  helpwin: <><rect x="4" y="4" width="20" height="20" fill="#d5d9ee" stroke="#333" strokeWidth="1.500" /><path d="M4 5h20v3H4z" fill="#5a5ab0" /><O y={16} r={7} f="#3b5bd6" w={0} /><text x="14" y="21" textAnchor="middle" fontSize="13" fontWeight="700" fill="#fff" fontFamily="Liberation Serif, serif">?</text></>,
  copyDim: <g opacity=".55"><Doc x={5} y={5} w={10} h={14} f="#aaa" c="#777" /><Doc x={11} y={10} w={10} h={13} f="#aaa" c="#777" /></g>,
  del: <L d="M6 6l16 16M22 6L6 22" w={3} c="#b0b0b0" />,
  up: <path d="M14 8l8 10H6z" fill="#bbb" stroke="#888" />,
  down: <path d="M6 9h16l-8 10z" fill="#bbb" stroke="#888" />,
  left: <path d="M18 6v17l-10-8z" fill="#999" stroke="#888" />,
  filter: <Funnel f="#5f86f5" c="#1b2d78" />,
  docDim: <g opacity=".55"><Doc x={7} y={5} w={13} h={17} f="#aaa" c="#777" /></g>,
  hammer: <><path d="M6 23L16 10" stroke="#1c2c66" strokeWidth="4" /><L d="M10 7l5-2 8 4-1 5-4-3-4 2z" f="#777" w={1.300} /></>,
  qmark: <Help r={8.500} />,
};

const Icon = ({ name, fly, corner, size = 28, black }) => (
  <svg width={size} height={size} viewBox="0 0 28 28" aria-hidden="true">
    {icons[name]}
    {corner && <path d="M20.500 4.500h4v3M3.500 22v3h4" fill="none" stroke="#111" strokeWidth="1.200" />}
    {fly && <path d="M27 21v6h-6z" fill={black ? '#000' : '#666'} />}
  </svg>
);

/* ---------- data ---------- */

const menus = ['파일(F)', '편집(E)', '뷰(V)', '커브(C)', '서피스(S)', 'SubD(U)', '솔리드(O)', '메쉬(M)', '치수(D)', '변형(T)', '도구(L)', '분석(A)', '렌더링(R)', '패널(P)', '도움말(H)'];
const toolTabs = ['표준', '구성평면', '뷰 설정', '표시', '선택', '뷰포트 레이아웃', '표시 여부', '변형', '커브 도구', '서피스 도구', '솔리드 도구', 'SubD 도구', '메쉬 도구', '렌더링 도구', '제도', '7 버전의 새 기능'];
/* A trailing "+" marks a fly-out, a leading "^" marks corner brackets. */
const row1 = 'new open save+ print props cut copy paste undo+ pan rotate zoomdyn zoomwin zoomext zoomsel zoomundo+ four+ car+ cplane+ circ+ ^shapes+ bulb+ ^bulbHalf+ lock+ layer+ wheel+ gball gballSel+ bball+ spot+ gears+ dims+ green+ help+'.split(' ');
const row2 = '^shapes ^shapesGray ^funnel ^diag ^rows ^boxSpark ^undo ^remote ^id ^box ^rgb ^ywedge ^rings ^dots ^prims ^ycone ^hatch ^dimang+ ^handy ^threeY ^black ^ysurf+ ^bwhite ^yplane+ ^ygrid+ ^ycube+ ^spiral+ ^spool+ ^chain+ ^pyramid+ | ^gball2 ^gcube ^cookie ^prims2 ^brush ^lens ^fence ^ubox ^hbox ^key ^tag ^keys ^rbox'.split(' ');
const side1 = 'select point+ poly+ curve+ circle+ ellipse+ arc+ rect+ hex+ fillet+ srfpts+ sweep+ bcube+ bspheres+ extrude+ mesh+ puzzle explode trim split group+ ungroup blend offset+ text scale+ arrayc orient shell+ project+ array+ alignc+ bend+ check+ solids+ pyramidHand+'.split(' ');
const side2 = 'alTop alBot alLeft alRight alMid alignc alBoth dist bspheres bdiff binter bsplit'.split(' ');
const layerTools = 'new copyDim del up down left filter+ docDim+ hammer+ qmark'.split(' ');

const Tool = ({ spec, h, size, black }) => {
  const name = spec.replace(/[\^+]/g, '');
  return (
    <ToolButton $h={h} aria-label={name}>
      <Icon name={name} corner={spec[0] === '^'} fly={spec.endsWith('+')} size={size} black={black} />
    </ToolButton>
  );
};

const viewportProps = [
  { k: '제목', v: 'Top' },
  { k: '너비', v: '2149', dim: true },
  { k: '높이', v: '1068', dim: true },
  { k: '투영', v: '평행', type: 'select' },
  { k: '잠김', type: 'check' },
];
const cameraProps = [
  { k: '렌즈 길이(mm)', v: '50.0', dim: true },
  { k: '회전', v: '0.0' },
  { k: 'X 위치', v: '-5.197' },
  { k: 'Y 위치', v: '14.582' },
  { k: 'Z 위치', v: '623.456' },
  { k: '대상까지 거리', v: '631.131', type: 'plain' },
  { k: '위치', v: '배치...', type: 'button' },
];
const targetProps = [{ k: 'X 대상', v: '-5.197' }];

const layers = [
  { name: 'Default', current: true },
  { name: 'cuv', bulb: '#6a9ce8', lock: 'open' },
  { name: '글씨', bulb: '#ffee8a', lock: 'open' },
  { name: '안테나', bulb: '#ffee8a', lock: 'open' },
  { name: 'PCB', bulb: '#ffee8a', lock: 'closed' },
  { name: '포트', bulb: '#ffee8a', lock: 'open' },
  { name: '2.5HDD', bulb: '#ffee8a', lock: 'open' },
];

const snaps = [['끝점', 1], ['근처점', 1], ['점', 1], ['중간점', 1], ['중심점', 1], ['교차점', 1], ['수직점', 1], ['접점', 1], ['사분점', 1], ['매듭점', 1], ['정점', 0], ['투영', -1], ['사용 안 함', -1]];
const toggles = [
  { t: '그리드 스냅', w: 102 },
  { t: '직교모드', w: 80 },
  { t: '평면모드', w: 80 },
  { t: '개체스냅', w: 80, on: true },
  { t: 'SmartTrack', w: 98, latin: true },
  { t: '검볼', w: 48, on: true },
  { t: '히스토리 기록', w: 118 },
  { t: '필터', w: 48 },
];

/* ---------- pieces ---------- */

const Arrow = ({ dir, w = 11, h = 14 }) => {
  const d = { up: 'M2 9l5-5 5 5', down: 'M2 4l5 5 5-5', left: 'M8 2L3 7l5 5', right: 'M3 2l5 5-5 5' }[dir];
  return <ArrowSvg width={w} height={h} viewBox={`0 0 ${w} ${h}`}><path d={d} fill="none" stroke="#555" strokeWidth="1.800" /></ArrowSvg>;
};

function Prop({ k, v, dim, type }) {
  return (
    <PropRow as={type === 'button' ? 'div' : 'label'}>
      <PropLabel $dim={dim}>{k}</PropLabel>
      <PropCell $plain={type === 'check' || type === 'plain' || type === 'button'}>
        {type === 'select' && <><PropSelect defaultValue={v}><option>{v}</option></PropSelect><Chevron><svg width="11" height="7"><path d="M1 1l4.500 4.500L10 1" fill="none" stroke="#333" /></svg></Chevron></>}
        {type === 'check' && <CheckBox type="checkbox" $m={3} />}
        {type === 'button' && <PlaceButton>{v}</PlaceButton>}
        {(!type || type === 'plain') && <PropInput defaultValue={v} readOnly={type === 'plain'} />}
      </PropCell>
    </PropRow>
  );
}

const LayerBulb = ({ c }) => (
  <svg width="12" height="18" viewBox="0 0 12 18"><path d="M4 12c0-3-3-4-3-7a5 4.500 0 0 1 10 0c0 3-3 4-3 7v3H4z" fill={c} stroke="#4b3a12" strokeWidth="1.200" /><path d="M4 13.500h4M5 16.500h2" stroke="#333" strokeWidth="1.500" /></svg>
);
const LayerLock = ({ open }) => (
  <svg width="16" height="18" viewBox="0 0 16 18">
    {open
      ? <><path d="M9 7V4q0-3 3-3t3 3v1" fill="none" stroke="#333" strokeWidth="1.600" /><rect x="1" y="7" width="11" height="9" fill="#ffe23d" stroke="#6b4f00" /></>
      : <><path d="M3.500 8V4q0-3 3-3t3 3v4" fill="none" stroke="#333" strokeWidth="1.600" /><rect x="1" y="8" width="11" height="8" fill="#6a9ce8" stroke="#23407a" /></>}
  </svg>
);

/* Half of the housing; the other half is its mirror image. */
const HalfBody = () => (
  <g fill="none" stroke="#000">
    <path d="M781 272H390Q340 262 280 197" strokeWidth="17" />
    <path d="M781 277H600Q480 280 390 284" strokeWidth="9" />
    <path d="M282 196C150 225 60 330 38 437" strokeWidth="12" />
    <path d="M282 197C150 228 63 330 40 437" strokeWidth="2" stroke="#777" />
    <path d="M33 434C56 452 67 490 67 530V890C67 925 56 960 33 985L42 992C78 965 91 925 91 880V540C91 495 80 458 44 430Z" fill="#000" stroke="none" />
    <path d="M46 446C62 470 70 490 72 520M46 976C62 955 70 930 72 905" strokeWidth="2" stroke="#777" />
    <path d="M83 530V890" strokeWidth="2" stroke="#555" strokeDasharray="3 7" />
    <path d="M38 985C66 1100 150 1200 282 1226" strokeWidth="12" />
    <path d="M40 985C68 1098 150 1197 282 1224" strokeWidth="2" stroke="#777" />
    <path d="M280 1225C330 1185 345 1151 395 1151H781" strokeWidth="18" />
    <path d="M781 286Q480 284 330 310C200 330 130 460 130 650V760C130 1000 190 1120 420 1130Q640 1134 781 1142" strokeWidth="9" />
    <path d="M500 291Q420 294 340 306C210 330 133 460 133 650" strokeWidth="1.500" stroke="#888" />
    <path d="M250 340V362Q248 370 235 370H175C140 410 121 480 121 550V760C124 930 140 1010 165 1045S230 1095 300 1106" strokeWidth="4" />
    <path d="M290 262C210 280 140 345 108 442M108 980C150 1070 200 1130 286 1157" strokeWidth="21" strokeLinecap="square" />
    <path d="M290 262C210 280 140 345 108 442M108 980C150 1070 200 1130 286 1157" strokeWidth="8" stroke="#969da5" strokeLinecap="square" />
    <path d="M528 288V325Q528 340 543 340H588Q603 340 603 325V288" strokeWidth="4" />
    <circle cx="267" cy="450" r="17" strokeWidth="4" />
    <circle cx="267" cy="988" r="17" strokeWidth="4" />
    <path d="M781 1128H430" strokeWidth="4" />
    <path d="M180 1006H781" strokeWidth="5" />
  </g>
);
const Antenna = () => (
  <g fill="none">
    <path d="M343 110h45q15 8 15 40t-20 42v80l-8 15h-30v-70l-12-30q-15-10-18-40 5-30 28-37z" fill="#0ff" />
    <path d="M333 195h62M343 218h46M345 240h40M358 200v75M374 200v75" stroke="#969da5" strokeWidth="4" />
    <rect x="336" y="123" width="60" height="60" rx="24" stroke="#000" strokeWidth="5" />
    <rect x="276" y="112" width="78" height="80" rx="32" stroke="#000" strokeWidth="5" />
    <path d="M300 122q30 0 30 30t-30 30" stroke="#000" strokeWidth="4" />
    <rect x="244" y="129" width="50" height="48" rx="20" stroke="#000" strokeWidth="5" />
    <circle cx="267" cy="153" r="12" stroke="#000" strokeWidth="4" />
    <path d="M258 153h22M300 153h22" stroke="#0ff" strokeWidth="7" />
  </g>
);

const Drawing = () => {
  const grid = Array.from({ length: 81 }, (_, i) => i * 9.875);
  return (
    <Scene viewBox="64 234 2149 1068" role="img" aria-label="Top">
      <rect x="753.500" y="401.500" width="790" height="790" fill="#969da5" />
      <path stroke="#888d97" strokeWidth="1" fill="none"
        d={grid.map(g => `M${Math.round(753 + g) + 0.5} 401.500v790M753.500 ${Math.round(401 + g) + 0.5}h790`).join('')} />
      <path d="M1148.500 401.500V802" stroke="#3f9440" strokeWidth="1.500" />
      <path d="M1148.500 796.500H1543.500" stroke="#9c4146" strokeWidth="1.500" />
      <path d="M906.500 702V517.500H1393.500V702" fill="none" stroke="#000" />
      <path d="M1148.500 727V936M925 794.500H1374" stroke="#000" />

      <g transform="translate(880 560) scale(.3444 .3333)">
        <Antenna />
        <g transform="translate(1562 0) scale(-1 1)"><Antenna /></g>
        <g fill="#0ff"><path d="M398 285h52v55l-8 15h-36l-8-15z" /><path d="M413 290h6v40h-6zM428 290h6v40h-6z" fill="#cfe" /></g>
        <path d="M611 284h338v73H611z" fill="none" stroke="#f0f" strokeWidth="5" />
        <path d="M620 284h20v52h-20zM660 284h24v52h-24zM692 284h18v55h-18zM720 284h28v52h-28zM757 284h38v55h-38zM806 284h20v52h-20zM836 284h36v52h-36zM882 284h24v52h-24zM918 284h24v52h-24z" fill="#f0f" />
        <path d="M615 338h330M645 350h40M720 350h45M800 350h45M880 350h45" stroke="#f0f" strokeWidth="7" />
        <path d="M1037 285h40v100h-40zM1077 283h96v82h-96z" fill="#fff" />
        <path d="M1047 305h18v15h-18zM1047 334h18v14h-18zM1047 360h18v14h-18z" fill="#c4c6ca" />
        <path d="M1062 1072h88v12h4v34h-4v10h-86v-10h-6v-34h4z" fill="#ececec" />
        <path d="M1160 1122V1063h34v56" fill="none" stroke="#000" strokeWidth="4" />
        <HalfBody />
        <g transform="translate(1562 0) scale(-1 1)"><HalfBody /></g>
        {[[1212, 337], [1244, 337], [1228, 340], [1228, 352], [1228, 365], [1228, 377], [1212, 379], [1244, 379]].map(([x, y], i) => <circle key={i} cx={x} cy={y} r="5" />)}
        <g stroke="#0f0" fill="none" strokeWidth="5">
          <path d="M92 572h60v56H92zM92 638h60v56H92zM92 590h40M92 612h40M92 655h40M92 678h40M106 572v122" />
        </g>
        <path d="M118 580h36M118 622h36M118 646h36M118 686h36" stroke="#000" strokeWidth="6" />
        <path d="M108 590h30v22h-30zM108 656h30v22h-30z" />
        <rect x="495" y="504" width="573" height="413" rx="20" fill="none" stroke="#0ff" strokeWidth="6" />
        <rect x="762" y="1054" width="38" height="42" />
        <path d="M774 1066h14M774 1075h14M774 1084h14" stroke="#777" strokeWidth="2" strokeDasharray="3 3" />
        <circle cx="941" cy="1063" r="10" fill="none" stroke="#000" strokeWidth="4" />
        {[614, 680, 745, 816, 881, 947].map(x => <rect key={x} x={x - 5} y="1104" width="11" height="16" />)}
      </g>

      <text x="1149" y="800" textAnchor="middle" fontSize="37" fontWeight="700" fill="none" stroke="#000" strokeWidth="1.500" fontFamily="DejaVu Sans, sans-serif">ASUS</text>
      <text x="1147" y="516" textAnchor="middle" fontSize="137" fontFamily="Liberation Sans, Arial, sans-serif">246.41</text>
      <rect x="916" y="396.500" width="459" height="137" fill="none" stroke="#f00" strokeWidth="5" />

      <path d="M110.500 1217V1256.500H149" fill="none" stroke="#5d6064" />
      <text x="112" y="1217" fontSize="17" fill="#5d6064" fontFamily="Liberation Sans, Arial, sans-serif">y</text>
      <text x="151" y="1258" fontSize="17" fill="#5d6064" fontFamily="Liberation Sans, Arial, sans-serif">x</text>
    </Scene>
  );
};

const GearEdge = () => (
  <TabRest>
    <svg width="10" height="22" viewBox="0 0 10 22" aria-hidden="true"><GearShape x={10} y={12} r={6} c="#bcc6dc" /></svg>
  </TabRest>
);

export default function App() {
  return (
    <Window>
      <Global />
      <Defs />
      <TitleBar>
        <AppBrand>
          <svg width="21" height="21" viewBox="0 0 21 21" aria-hidden="true"><rect x="1" y="1" width="20" height="20" fill="#000" /><path d="M2 4l6 5 4 7 7-3-2-4-3 2-2-7-3 3-4-5zM15 5l3 3V3z" fill="#eee" /></svg>
          <AppTitle>6.3dm (73 MB) - Rhinoceros 7 Corporate - [Top]</AppTitle>
        </AppBrand>
        <CaptionButton aria-label="최소화"><svg width="14" height="14"><path d="M1 7.500h12" stroke="#000" /></svg></CaptionButton>
        <CaptionButton aria-label="복원"><svg width="14" height="14"><path d="M1.500 3.500h9v9h-9zM3.500 3V1.500h9v9H11" fill="none" stroke="#000" /></svg></CaptionButton>
        <CaptionButton aria-label="닫기"><svg width="14" height="14"><path d="M1 1l12 12M13 1L1 13" stroke="#000" /></svg></CaptionButton>
      </TitleBar>
      <MenuBar>{menus.map(m => <MenuItem key={m}>{m}</MenuItem>)}</MenuBar>

      <CommandArea>
        <Grip />
        <CommandBody>
          <History>
            <HistoryLine>1 개의 선형 치수가 선택에 추가되었습니다.</HistoryLine>
            <HistoryLine>1 개의 선형 치수가 선택에 추가되었습니다.</HistoryLine>
          </History>
          <Prompt>명령:<PromptInput /></Prompt>
          <EdgeArrows>
            <svg width="7" height="62" viewBox="0 0 7 62" aria-hidden="true"><path d="M1 12l5-5 5 5M1 24l5 5 5-5" fill="none" stroke="#444" strokeWidth="1.500" /><path d="M0 37.500h7" stroke={C.line} /><path d="M2 47l4-4 4 4zM2 54l4 4 4-4z" fill="#222" /></svg>
          </EdgeArrows>
        </CommandBody>
      </CommandArea>

      <ToolbarArea>
        <DockRow>
          <Grip $gap={2} />
          <TabbedDock>
            <TabStrip role="tablist">
              {toolTabs.map((t, i) => <ToolTab key={t} role="tab" $active={i === 0}>{t}</ToolTab>)}
              <TabRest><svg width="18" height="18" viewBox="0 0 28 28" aria-hidden="true"><GearShape r={7} c="#8b8b90" w={2} /></svg></TabRest>
            </TabStrip>
            <ToolRow $h={34}>{row1.map((s, i) => <Tool key={i} spec={s} size={27} />)}</ToolRow>
          </TabbedDock>
          <PlainDock>
            <Grip $gap={2} />
            {[0, 1, 2].map(k => <ToolButton key={k} aria-label="render"><svg width="26" height="26" viewBox="0 0 28 28"><Swirl kind={k} /></svg></ToolButton>)}
          </PlainDock>
        </DockRow>
        <ToolRow $h={35} $left={3}>
          <Grip $gap={2} />
          {row2.map((s, i) => (s === '|' ? <Separator key={i} /> : <Tool key={i} spec={s} size={26} />))}
        </ToolRow>
      </ToolbarArea>

      <Main>
        <SideBar>
          <SideGroup $rest>
            <SideGrip $top={8} />
            <SideTools>{side1.map((s, i) => <Tool key={i} spec={s} h={28} size={28} />)}</SideTools>
          </SideGroup>
          <SideGroup $min={388}>
            <SideGrip $top={5} />
            <SideTools>{side2.map((s, i) => <Tool key={i} spec={s} h={28} size={28} />)}</SideTools>
          </SideGroup>
        </SideBar>

        <Center>
          <Viewport>
            <Drawing />
            <ViewLabel>Top<svg width="20" height="23" aria-hidden="true"><path d="M2.500 2v20" stroke="#222" /><path d="M5 9h9l-4.500 5z" fill="#222" /></svg></ViewLabel>
          </Viewport>
          <ViewTabs>
            <ViewTab>Perspective</ViewTab>
            <Slant viewBox="0 0 25 27" aria-hidden="true"><path d="M0 0L24 26.500h1" fill="none" stroke={C.line} /></Slant>
            <SlantGap />
            <ActiveViewTab>Top</ActiveViewTab>
            <ViewTab>Front</ViewTab>
            <ViewTab>Right</ViewTab>
            <ViewTab aria-label="새 뷰포트"><svg width="12" height="12"><path d="M4.500 .5h3v4h4v3h-4v4h-3v-4h-4v-3h4z" fill="none" stroke="#888" /></svg></ViewTab>
          </ViewTabs>
        </Center>

        <Panels>
          <PanelTitle>속성: 뷰 속성<DoubleRule /></PanelTitle>
          <PanelTabs>
            {['wheel', 'matball', 'tube', 'folder', 'helpwin'].map((n, i) => <PanelTab key={n} $active={i === 0} aria-label={n}><Icon name={n} size={25} /></PanelTab>)}
            <GearEdge />
          </PanelTabs>
          <PropsBody>
            <ModeRow>
              <ModeButton $on aria-label="카메라">
                <svg width="30" height="28" viewBox="0 0 30 28"><path d="M3 8l7-1 3-4h7l3 4 4 2v12l-3 3H5l-2-3z" fill="#222" stroke="#555" /><circle cx="18" cy="15" r="7" fill="#111" stroke="#ddd" strokeWidth="1.500" /><circle cx="18" cy="15" r="4" fill="#2c4a3a" stroke="#666" /></svg>
              </ModeButton>
              <ModeButton aria-label="배경 화면">
                <svg width="32" height="29"><rect x="1" y="1" width="30" height="27" fill="#8fc3de" stroke="#555" strokeWidth="2" /><rect x="6" y="6.500" width="20" height="16" fill="#fff" stroke="#e33" strokeWidth="1.500" /></svg>
              </ModeButton>
            </ModeRow>
            <ScrollArea>
              <PropsList>
                <SectionTitle>뷰포트</SectionTitle>
                {viewportProps.map(p => <Prop key={p.k} {...p} />)}
                <SectionTitle>카메라</SectionTitle>
                {cameraProps.map(p => <Prop key={p.k} {...p} />)}
                <SectionTitle>대상</SectionTitle>
                {targetProps.map(p => <Prop key={p.k} {...p} />)}
              </PropsList>
              <VScroll>
                <Arrow dir="up" w={10} h={18} />
                <VThumb />
                <Arrow dir="down" w={10} h={18} />
              </VScroll>
            </ScrollArea>
          </PropsBody>
          <Divider />
          <LayerGrip><DoubleRule /></LayerGrip>
          <LayerTabs>
            <LayerTab><Icon name="layer" size={24} /><LayerTabText>레이어</LayerTabText></LayerTab>
            <LayerSlant viewBox="0 0 31 30" aria-hidden="true"><path d="M0 .5L31 29.500" fill="none" stroke={C.line} /></LayerSlant>
            <GearEdge />
          </LayerTabs>
          <LayerTools>{layerTools.map((s, i) => <Tool key={i} spec={s} size={26} black />)}</LayerTools>
          <LayerBody>
            <LayerTable>
              <thead>
                <tr><Th $w={80}>레이어</Th><Th $w={21} /><Th $w={21} /><Th $w={21} /><Th $w={21} /><Th $w={80}>재질</Th><Th $w={80}>선종류</Th></tr>
              </thead>
              <tbody>
                {layers.map(l => (
                  <Tr key={l.name} $bold={l.current}>
                    <Td $p={11}>{l.name}</Td>
                    <Td $p={2}>{l.current && <svg width="18" height="14"><path d="M1 7l5 5L16 2" fill="none" stroke="#000" strokeWidth="2" /></svg>}</Td>
                    <Td $p={4}>{l.bulb && <LayerBulb c={l.bulb} />}</Td>
                    <Td $p={3}>{l.lock && <LayerLock open={l.lock === 'open'} />}</Td>
                    <Td $p={3}><Swatch /></Td>
                    <Td $p={5}><Material /></Td>
                    <Td $p={6}>Contin...</Td>
                  </Tr>
                ))}
              </tbody>
            </LayerTable>
            <HScroll><Arrow dir="left" /><HThumb /><Arrow dir="right" /></HScroll>
          </LayerBody>
        </Panels>
      </Main>

      <SnapBar>
        <Grip $gap={5} />
        {snaps.map(([t, s]) => (
          <SnapItem key={t}><CheckBox type="checkbox" defaultChecked={s === 1} disabled={s === -1} />{t}</SnapItem>
        ))}
      </SnapBar>
      <StatusBar>
        <StatusCell $w={78}>구성평면</StatusCell>
        <StatusCell $w={112} $value>x -378.430</StatusCell>
        <StatusCell $w={112} $value>y 282.297</StatusCell>
        <StatusCell $w={112} $value>z 0.000</StatusCell>
        <StatusCell $w={112}>밀리미터</StatusCell>
        <StatusCell $w={216} $left $value><StatusSwatch />Default</StatusCell>
        {toggles.map(({ t, w, on, latin }) => <StatusToggle key={t} $w={w} $on={on} $value={latin}>{t}</StatusToggle>)}
        <Memory>메모리 사용: 763 MB</Memory>
      </StatusBar>
    </Window>
  );
}
